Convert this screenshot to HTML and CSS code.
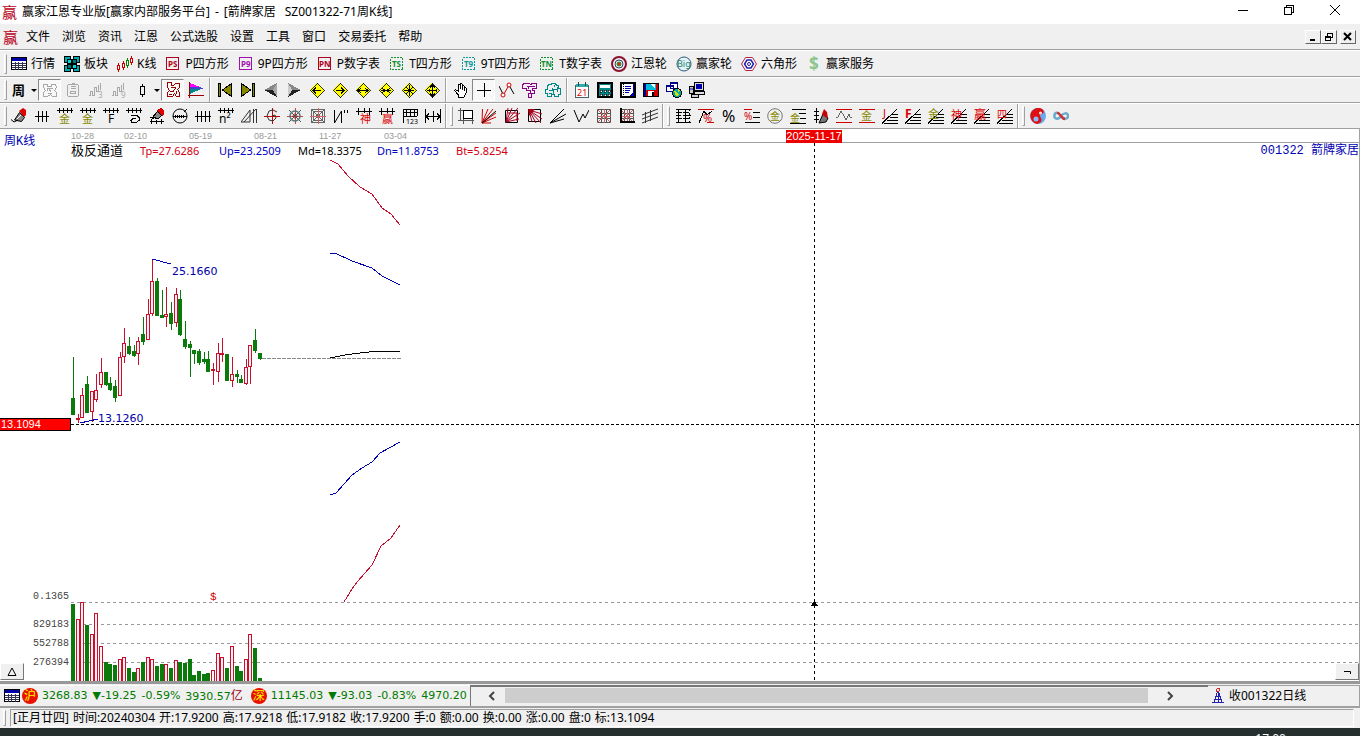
FILE: index.html
```html
<!DOCTYPE html>
<html lang="zh-CN">
<head>
<meta charset="utf-8">
<title>赢家江恩专业版</title>
<link rel="stylesheet" href="styles.css">
</head>
<body>
<svg class="sprite" aria-hidden="true">
  <defs>
    <symbol id="table" viewBox="0 0 16 16"><path fill="#fff" stroke="#000" d="M.5 1.500h15v12H.5z"/><path fill="#00a" d="M1 2h14v3H1z"/><path stroke="#335" d="M1 7.500h14M1 9.500h14M1 11.500h14M4.500 6v8M7.500 6v8M11.500 6v8"/></symbol>
    <symbol id="blocks" viewBox="0 0 16 16"><path fill="#0aa" stroke="#000" d="M.5.5h6v6h-6zM9.500.5h6v6h-6zM.5 9.500h6v6h-6zM9.500 9.500h6v6h-6z"/><path fill="#0dd" stroke="#000" d="M3.500 3.500h4v4h-4zM8.500 8.500h4v4h-4z"/><path fill="#077" stroke="#000" d="M8.500 3.500h4v4h-4zM3.500 8.500h4v4h-4z"/></symbol>
    <symbol id="kline" viewBox="0 0 16 16"><path stroke="#c00" fill="#fff" d="M1.500 7v2M1.500 14v2M.5 9.500h2v4h-2zM6.500 5v2M6.500 12v2M5.500 7.500h2v4h-2zM14.500 0v2M14.500 7v2M13.500 2.500h2v4h-2z"/><path stroke="#080" fill="#fff" d="M10.500 2v2M10.500 10v2M9.500 4.500h2v5h-2z"/></symbol>
    <symbol id="box" viewBox="0 0 16 16"><path stroke="currentColor" d="M1.500 1.500h12v12h-12z"/></symbol>
    <symbol id="boxdash" viewBox="0 0 16 16"><path stroke="currentColor" stroke-dasharray="2 1" d="M1.500 1.500h12v12h-12z"/></symbol>
    <symbol id="wheel" viewBox="0 0 16 16"><circle cx="8" cy="8" r="7" stroke="#8a1030" stroke-width="2"/><circle cx="8" cy="8" r="4" stroke="#246" stroke-width="1"/><circle cx="8" cy="8" r="2" fill="#d22" stroke="#282"/></symbol>
    <symbol id="big" viewBox="0 0 16 16"><circle cx="8" cy="8" r="7" fill="#e4f2fa" stroke="#357" /><text x="1" y="11" font-size="9" fill="#286">Big</text></symbol>
    <symbol id="hex" viewBox="0 0 16 16"><path fill="#fff" stroke="#b02040" d="M4.500 1.500h7l4 6.500-4 6.500h-7L.5 8z"/><path stroke="#22a" stroke-width="1.500" d="M6 4h4l2.500 4L10 12H6L3.500 8z"/><circle cx="8" cy="8" r="1.500" stroke="#22a"/></symbol>
    <symbol id="dollar" viewBox="0 0 16 16"><text x="3" y="14" font-size="17" font-weight="bold" fill="#8cc58c">$</text></symbol>

    <symbol id="maze" viewBox="0 0 16 16"><path stroke="currentColor" d="M1.500 2.500h4v2h4v-2h4l1 3-2 3 2 2v4h-4l-2-2-3 2h-4v-4l2-2-2-3zM4.500 6.500h6M4.500 9.500l2-3 3 4M6 11.500h4"/></symbol>
    <symbol id="paste" viewBox="0 0 16 16"><path stroke="currentColor" d="M3.500 2.500h9l1 1v10l-1 1h-9l-1-1v-10zM6.500 1.500h3M5.500 6.500h5M5.500 9.500h5v2h-5zM5.500 4.500h5"/></symbol>
    <symbol id="wave3" viewBox="0 0 16 16"><path stroke="currentColor" d="M1 13.500h1.500v-4h2v4h1.500v-8h2v4h2v-7M12.500 1v7"/><text x="10" y="16" font-size="8" fill="currentColor">3</text></symbol>
    <symbol id="wave9" viewBox="0 0 16 16"><path stroke="currentColor" d="M1 13.500h1.500v-4h2v4h1.500v-8h2v4h2v-7M12.500 1v7"/><text x="10" y="16" font-size="8" fill="currentColor">9</text></symbol>
    <symbol id="candle" viewBox="0 0 16 16"><path stroke="#000" d="M8.500 2v2.500M8.500 12v3M6.500 4.500h4v8h-4z"/></symbol>
    <symbol id="pattern" viewBox="0 0 16 16"><path stroke="#900" d="M2.500.5h4v3h2l2-2h4v4l-2 2 2 3v4h-3l-2-3-2 3h-5v-4l2-2-2-3zM6 5.500h4M5 9.500h3l3-4M11.500 9v3M3.500 12.500h3"/></symbol>
    <symbol id="flags" viewBox="0 0 16 16"><path fill="#f0f" d="M2 1l10 4H2z"/><path fill="#44c" d="M2 5h10l4 2H2z"/><path fill="#088" d="M2 7h11L2 12z"/><path stroke="#900" d="M1.500 0v15.500M0 13.500h16"/></symbol>
    <symbol id="first" viewBox="0 0 16 16"><path fill="#880" stroke="#000" d="M14.500 1.500v13L5.500 8zM1.500 1.500h2v13h-2z"/></symbol>
    <symbol id="last" viewBox="0 0 16 16"><path fill="#880" stroke="#000" d="M1.500 1.500v13L10.500 8zM12.500 1.500h2v13h-2z"/></symbol>
    <symbol id="prev" viewBox="0 0 16 16"><path fill="#aaa" d="M14 1v14L10 8z"/><path fill="#888" d="M14 1L1 8h9z"/><path fill="#222" d="M1 8l13 7-4-7z"/></symbol>
    <symbol id="next" viewBox="0 0 16 16"><path fill="#ccc" d="M2 1v14L6 8z"/><path fill="#888" d="M2 1l13 7H6z"/><path fill="#222" d="M15 8L2 15l4-7z"/></symbol>
    <symbol id="diamond" viewBox="0 0 16 16"><path fill="#ff0" stroke="#000" stroke-width=".8" d="M8 .5L15.500 8 8 15.500.5 8z"/></symbol>
    <symbol id="d-left" viewBox="0 0 16 16"><use href="#diamond"/><path stroke="#000" d="M4 8.500h8M7 5.500l-3 3 3 3"/></symbol>
    <symbol id="d-right" viewBox="0 0 16 16"><use href="#diamond"/><path stroke="#000" d="M4 8.500h8M9 5.500l3 3-3 3"/></symbol>
    <symbol id="d-wide" viewBox="0 0 16 16"><use href="#diamond"/><path stroke="#000" d="M3 8.500h10M6 6L3 8.500 6 11M10 6l3 2.500-3 2.500"/></symbol>
    <symbol id="d-narrow" viewBox="0 0 16 16"><use href="#diamond"/><path stroke="#000" d="M3 8.500h10M4 6l3 2.500L4 11M12 6L9 8.500l3 2.500"/></symbol>
    <symbol id="d-star" viewBox="0 0 16 16"><use href="#diamond"/><path stroke="#000" d="M3 8.500h10M8.500 3v11M5 5l7 7M12 5l-7 7"/></symbol>
    <symbol id="d-four" viewBox="0 0 16 16"><use href="#diamond"/><path stroke="#000" d="M3 8.500h10M8.500 3v11M6 5.500L8.500 3 11 5.500M6 11.500L8.500 14l2.500-2.500M5 7v3M12 7v3"/></symbol>
    <symbol id="hand" viewBox="0 0 16 16"><path fill="#fff" stroke="#000" d="M5.500 15v-2l-4-4.500 1-1 3 2v-7l1.500-.5.500 5V2l1.500-.5.5 6V3.500l1.500 0 .5 5V5.500l1.500.5v5l-2 4z"/></symbol>
    <symbol id="cross" viewBox="0 0 16 16"><path stroke="#000" d="M1 8.500h14M8.500 1v14"/></symbol>
    <symbol id="nodes" viewBox="0 0 16 16"><path stroke="#000" d="M0 4l4 8M11 5l4 7"/><path stroke="#c00" d="M5 12l5-9"/><circle cx="4" cy="13" r="2" stroke="#c00" fill="#fff"/><circle cx="10" cy="3" r="2" stroke="#c00" fill="#fff"/></symbol>
    <symbol id="purple" viewBox="0 0 16 16"><path stroke="#808" d="M2.500 1.500h5l1 1 2-1h4v5h-4v2h2v3h-3v4h-3v-4h2v-3h-4v-2h-4v-4zM4.500 4.500h8M6.500 4v3"/></symbol>
    <symbol id="teal" viewBox="0 0 16 16"><path stroke="#088" d="M3.500 2.500h3v-1h4l1 2h2v3h2v6h-2v2h-4v-2h-3v2h-4v-3h-2v-4h2v-3zM3.500 8.500h4v-3M8.500 11.500v-4h3M12.500 4.500v5M4 11.500h3M9.500 3v2"/></symbol>
    <symbol id="calendar" viewBox="0 0 16 16"><path fill="#fff" stroke="#466" d="M1.500 3.500h13v12h-13z"/><path fill="#3aa" d="M2 2h12v3H2z"/><path stroke="#244" d="M4.500 0v4M11.500 0v4"/><text x="3" y="14" font-size="9" fill="#d00">21</text></symbol>
    <symbol id="calc" viewBox="0 0 16 16"><path fill="#088" stroke="#000" stroke-width="2" d="M1 1h14v14H1z"/><path fill="#fff" d="M3 3h10v3H3z"/><path fill="#fff" stroke="#000" stroke-width=".6" d="M3 8h2v2H3zM7 8h2v2H7zM11 8h2v2h-2zM3 12h2v2H3zM7 12h2v2H7zM11 12h2v2h-2z"/></symbol>
    <symbol id="note" viewBox="0 0 16 16"><path fill="#fff" stroke="#000" stroke-width="2" d="M1 1h14v14H1z"/><path fill="#00a" d="M13 2h1v12H9l4-3z"/><path stroke="#00a" d="M5 4.500h6M5 6.500h6M5 8.500h5M5 10.500h4"/><path stroke="#000" stroke-dasharray="1 1" d="M3.500 2v12"/></symbol>
    <symbol id="disk" viewBox="0 0 16 16"><path fill="#c00" stroke="#000" d="M.5 1.500h15v13H.5z"/><path fill="#0bd" d="M3 2h10v6H3z"/><path fill="#008" d="M1 2h2v12H1z"/><path fill="#fff" d="M5 9h6v5H5zM7 2h5v4z"/><path fill="#000" d="M9 10h2v4H9z"/></symbol>
    <symbol id="globe" viewBox="0 0 16 16"><path fill="#fff" stroke="#008" d="M4.500.5h7v6h-7zM.5 3.500h7v6h-7z"/><path fill="#008" d="M1 3h7v2H1zM5 0h7v2H5z"/><circle cx="11" cy="11" r="4.500" fill="#0aa" stroke="#000"/><path fill="#dd0" d="M8 9l3 1 2 3-3 1zM12 7l2 2-2 1z"/></symbol>
    <symbol id="pc" viewBox="0 0 16 16"><path fill="#ddd" stroke="#000" d="M5.500.5h9v8h-9zM5.500 9.500h10v3h-10z"/><path fill="#00a" d="M7 2h6v5H7z"/><path fill="#ccc" stroke="#000" d="M.5 4.500h4v7h-4zM2.500 12.500h7v3h-7z"/><path fill="#66c" d="M1 6h3v2H1z"/></symbol>

    <symbol id="pen" viewBox="0 0 16 16"><path fill="#888" stroke="#000" d="M8.500 4.500l5 5-3 4-7-1.500z"/><path fill="#d00" d="M8 3l4-3 3 2v5l-2 2z"/><path stroke="#fff" d="M6 11l4-4"/><path stroke="#000" d="M0 11.500l3 2.500 4-2"/></symbol>
    <symbol id="ticks" viewBox="0 0 16 16"><path stroke="#000" d="M1 8.500h14M4.500 3v11M8.500 3v11M12.500 3v11"/></symbol>
    <symbol id="ticks4" viewBox="0 0 16 16"><path stroke="#000" d="M0 8.500h16M2.500 3v11M6.500 3v11M10.500 3v11M14.500 3v11"/></symbol>
    <symbol id="comb" viewBox="0 0 16 16"><path stroke="#000" d="M0 2.500h16M2.500 0v5M6.500 0v5M10.500 0v5M14.500 0v5"/></symbol>
    <symbol id="comb-gold" viewBox="0 0 16 16"><use href="#comb"/><text x="2" y="15" font-size="11" fill="#880">金</text></symbol>
    <symbol id="comb-f" viewBox="0 0 16 16"><use href="#comb"/><text x="5" y="15" font-size="12" fill="#000">F</text></symbol>
    <symbol id="comb-spiral" viewBox="0 0 16 16"><use href="#comb"/><path stroke="#000" d="M5 7.500h6l2 2v3l-3 2H6l-1-2 2-2h3"/></symbol>
    <symbol id="pen-ruler" viewBox="0 0 16 16"><path fill="#888" stroke="#000" d="M8.500 3.500l4 4-3 3-6-1z"/><path fill="#d00" d="M8 2l4-2 3 2v4l-2 2z"/><path stroke="#000" d="M1 13.500h14M2.500 11v5M7.500 12v4M12.500 11v5M1 9.500l4 1"/></symbol>
    <symbol id="round-ruler" viewBox="0 0 16 16"><circle cx="8" cy="8" r="7" stroke="#000"/><path stroke="#000" d="M1 8.500h14M3.500 7v3M5.500 7v3M7.500 7v3M9.500 7v3M11.500 7v3M12 4l3-3"/></symbol>
    <symbol id="comb-n" viewBox="0 0 16 16"><use href="#comb"/><text x="1" y="15" font-size="12" fill="#000">n²</text></symbol>
    <symbol id="hills" viewBox="0 0 16 16"><path stroke="#333" d="M0 14L9 2v12zM3 14L15 1M12.500 1v14M15.500 1v14"/></symbol>
    <symbol id="spiral" viewBox="0 0 16 16"><path stroke="#c00" d="M0 8.500h16M8.500 0v16"/><path stroke="#333" d="M8 8l3-1 1 3-3 3-4-1-2-4 2-5 4-1 4 2"/></symbol>
    <symbol id="radial" viewBox="0 0 16 16"><path stroke="#c44" d="M0 8.500h16M8.500 0v16"/><path stroke="#555" d="M2 2l12 12M14 2L2 14"/><circle cx="8" cy="8" r="5" stroke="#577" stroke-width="1.500"/><circle cx="8" cy="8" r="2" stroke="#833"/></symbol>
    <symbol id="squares" viewBox="0 0 16 16"><path stroke="#666" d="M1.500 1.500h13v13h-13zM3.500 3.500h9v9h-9zM6.500 6.500h3v3h-3zM1 1l14 14M15 1L1 15"/><path stroke="#c66" d="M0 8.500h16M8.500 0v16"/></symbol>
    <symbol id="zig" viewBox="0 0 16 16"><path stroke="#000" d="M1.500 2v13L8.500 3v12M11.500 2v3M14.500 2v3"/></symbol>
    <symbol id="comb-shen" viewBox="0 0 16 16"><path stroke="#000" d="M0 3.500h16M2.500 0v7M8.500 0v5M13.500 0v7"/><text x="4" y="15" font-size="11" fill="#d00">神</text></symbol>
    <symbol id="comb-win" viewBox="0 0 16 16"><path stroke="#000" d="M0 3.500h16M2.500 0v7M8.500 0v5M13.500 0v7"/><text x="3" y="15" font-size="11" fill="#d00">赢</text></symbol>
    <symbol id="ruler123" viewBox="0 0 16 16"><path stroke="#000" d="M1.500 15V1.500h14V8M1 4.500h14M1 8.500h14M4.500 2v7M8.500 2v7M12.500 2v7"/><text x="4" y="16" font-size="7" fill="#000">123</text></symbol>
    <symbol id="span" viewBox="0 0 16 16"><path stroke="#000" d="M.5 1v14M15.500 1v14M1 8.500h14M4 5.500l-3 3 3 3M12 5.500l3 3-3 3M8.500 3v11"/></symbol>

    <symbol id="frame" viewBox="0 0 16 16"><path stroke="#555" d="M2.500 0v13M0 2.500h5M0 12.500h16M5.500 10v6M14.500 10v6"/><path fill="#fff" stroke="#000" d="M5.500 2.500h9v8h-9z"/></symbol>
    <symbol id="fan" viewBox="0 0 16 16"><path stroke="#c00" d="M1 15L1.500 1M1 15L7 1M1 15L12 1M1 15L15 5M1 15l14-6M1 15h9"/><path stroke="#000" d="M1 15L15 3"/></symbol>
    <symbol id="fan-box" viewBox="0 0 16 16"><path stroke="#000" d="M1.500 2.500h12v12h-12z"/><path stroke="#a02" d="M2 14L4 0M2 14L8 0M2 14L14 0M2 14l14-9M2 14l13-3M4 5h9v8"/></symbol>
    <symbol id="fan-down" viewBox="0 0 16 16"><path stroke="#000" d="M1.500 1.500h12v12h-12z"/><path fill="#900" d="M1 1h7L2 8z"/><path stroke="#a02" d="M2 2l13 4M2 2l13 9M2 2l12 13M2 2l7 13M2 2l3 12"/></symbol>
    <symbol id="rays" viewBox="0 0 16 16"><path stroke="#000" d="M0 15L14 1M0 15L16 6M0 15l14-4"/></symbol>
    <symbol id="vee" viewBox="0 0 16 16"><path stroke="#000" d="M1 2l5 12 4-8 2 4 4-8"/></symbol>
    <symbol id="net" viewBox="0 0 16 16"><path stroke="#555" d="M1.500 1.500h13v13h-13zM5.500 1v14M10.500 1v14M1 5.500h14M1 10.500h14"/><path stroke="#c66" d="M1 1l14 14M15 1L1 15M1 8.500h14M8.500 1v14"/></symbol>
    <symbol id="net-axis" viewBox="0 0 16 16"><use href="#net"/><path stroke="#000" stroke-width="2" d="M2 0v14h14"/></symbol>
    <symbol id="channel" viewBox="0 0 16 16"><path stroke="#333" d="M0 7l16-6M0 11l16-6M0 15l16-6M3.500 4v11M8.500 2v11"/></symbol>

    <symbol id="ladder" viewBox="0 0 16 16"><path stroke="#000" d="M3.500 1v14M10.500 1v14M1 1.500h15M1 4.500h6M1 7.500h5M1 10.500h6M1 14.500h15M8 4.500h6M8 7.500h8M8 10.500h6"/><path stroke="#000" stroke-dasharray="2 2" d="M14.500 1v14"/></symbol>
    <symbol id="pct-red" viewBox="0 0 16 16"><path stroke="#c00" d="M0 1.500h16M9 14.500h7"/><path stroke="#000" d="M1 15L6 3l3 4 5-4"/><text x="5" y="14" font-size="11" fill="#c00">%</text></symbol>
    <symbol id="pct" viewBox="0 0 16 16"><text x="1" y="14" font-size="16" fill="#000">%</text></symbol>
    <symbol id="pct-lines" viewBox="0 0 16 16"><path stroke="#c00" d="M0 1.500h8"/><path stroke="#000" d="M9 4.500h7M9 9.500h7M1 14.500h15"/><text x="0" y="12" font-size="10" fill="#c00">%</text></symbol>
    <symbol id="gold-round" viewBox="0 0 16 16"><circle cx="8" cy="8" r="7.300" stroke="#777"/><text x="3" y="12" font-size="10" fill="#880">金</text></symbol>
    <symbol id="gold-lines" viewBox="0 0 16 16"><path stroke="#000" d="M2 1.500h14M9 5.500h7M10 10.500h6M0 15.500h16"/><text x="0" y="14" font-size="10" fill="#880">金</text></symbol>
    <symbol id="pen-axis" viewBox="0 0 16 16"><path stroke="#000" d="M3.500 0v15M1 3.500h5M1 7.500h5M1 11.500h5"/><path fill="#777" stroke="#000" d="M10 6l5 4-2 4-7 1z"/><path fill="#c00" d="M9 6l2-5 3 3 1 6-3-1z"/></symbol>
    <symbol id="wave-lines" viewBox="0 0 16 16"><path stroke="#c00" d="M0 1.500h16M0 14.500h16"/><path stroke="#666" d="M0 9h2l3-6 3 5 2 4 3-6 1 3h2"/></symbol>
    <symbol id="gold-band" viewBox="0 0 16 16"><path stroke="#c00" d="M0 1.500h16M0 14.500h16"/><text x="2" y="12" font-size="11" fill="#880">金</text></symbol>
    <symbol id="slope" viewBox="0 0 16 16"><path stroke="#000" d="M0 15.500L15 1M9 6.500h7M8 9.500h8M5 12.500h11M2 15.500h14"/></symbol>
    <symbol id="s-j" viewBox="0 0 16 16"><use href="#slope"/><text x="1" y="9" font-size="11" fill="#d00">J</text></symbol>
    <symbol id="s-f" viewBox="0 0 16 16"><use href="#slope"/><text x="0" y="10" font-size="12" font-weight="bold" fill="#d00">F</text></symbol>
    <symbol id="s-gold" viewBox="0 0 16 16"><use href="#slope"/><text x="0" y="10" font-size="11" fill="#880">金</text></symbol>
    <symbol id="s-shen" viewBox="0 0 16 16"><use href="#slope"/><text x="0" y="11" font-size="11" fill="#d00">神</text></symbol>
    <symbol id="s-win" viewBox="0 0 16 16"><use href="#slope"/><text x="0" y="11" font-size="12" fill="#d00">赢</text></symbol>
    <symbol id="s-four" viewBox="0 0 16 16"><use href="#slope"/><text x="0" y="10" font-size="10" fill="#d00">四</text></symbol>
    <symbol id="yinyang" viewBox="0 0 16 16"><circle cx="8" cy="8" r="8" fill="#6ae"/><path fill="#d11" d="M10 0a8 8 0 1 0-3 16c5-1 5-4 4-6s-2-3 1-4 2-5-2-6z"/><circle cx="10.500" cy="5" r="1.500" fill="#fdd"/><circle cx="6" cy="11" r="2.500" fill="#8bf"/></symbol>
    <symbol id="infinity" viewBox="0 0 16 16"><path stroke="#6ac" stroke-width="2.500" d="M8 8c2-3 7-4 7 0s-5 3-7 0"/><path stroke="#6ac" stroke-width="2.500" d="M4 4.800c-3 0-4 6 0 6 2 0 3-1 4-2.800"/><path stroke="#c33" stroke-width="2.500" d="M4 4.800c2 0 3 2 4 3.200s2 3 4 3"/></symbol>
  </defs>
</svg>

<header class="titlebar">
  <span class="logo">赢</span>
  <h1 class="title"><span>赢家江恩专业版[赢家内部服务平台]</span><span>-</span><span>[箭牌家居</span><span class="code">SZ001322-71周K线]</span></h1>
  <div class="wincontrols">
    <button aria-label="最小化"><svg viewBox="0 0 12 12"><path d="M1 6.500h10"/></svg></button>
    <button aria-label="还原"><svg viewBox="0 0 12 12"><path d="M1.500 3.500h7v7h-7zM3.500 3V1.500h7v7H9"/></svg></button>
    <button aria-label="关闭"><svg viewBox="0 0 12 12" class="smooth"><path d="M1 1l10 10M11 1L1 11"/></svg></button>
  </div>
</header>

<nav class="menubar">
  <span class="logo">赢</span>
  <button>文件</button><button>浏览</button><button>资讯</button><button>江恩</button><button>公式选股</button><button>设置</button><button>工具</button><button>窗口</button><button>交易委托</button><button>帮助</button>
  <div class="mdi">
    <button aria-label="最小化窗口"><svg viewBox="0 0 10 10"><path d="M2 8h5"/></svg></button>
    <button aria-label="还原窗口"><svg viewBox="0 0 10 10"><path class="thin" d="M3.500 4V1.500h5v4H7M3 1.500h6M1.500 4.500h5v4h-5zM1 5.500h6"/></svg></button>
    <button aria-label="关闭窗口" class="apart"><svg viewBox="0 0 10 10" class="smooth"><path d="M1 1l7 7M8 1L1 8"/></svg></button>
  </div>
</nav>

<div class="toolbar labelled">
  <i class="grip"></i>
  <button><svg><use href="#table"/></svg>行情</button>
  <button><svg><use href="#blocks"/></svg>板块</button>
  <button><svg><use href="#kline"/></svg>K线</button>
  <button><svg class="red"><use href="#box"/><text x="3" y="11">PS</text></svg>P四方形</button>
  <button><svg class="violet"><use href="#box"/><text x="3" y="11">P9</text></svg>9P四方形</button>
  <button><svg class="red"><use href="#box"/><text x="2" y="11">PN</text></svg>P数字表</button>
  <button><svg class="green"><use href="#boxdash"/><text x="3" y="11">TS</text></svg>T四方形</button>
  <button><svg class="cyan"><use href="#boxdash"/><text x="3" y="11">T9</text></svg>9T四方形</button>
  <button><svg class="green"><use href="#boxdash"/><text x="2" y="11">TN</text></svg>T数字表</button>
  <button><svg class="smooth"><use href="#wheel"/></svg>江恩轮</button>
  <button><svg class="smooth"><use href="#big"/></svg>赢家轮</button>
  <button><svg class="smooth"><use href="#hex"/></svg>六角形</button>
  <button><svg><use href="#dollar"/></svg>赢家服务</button>
</div>

<div class="toolbar">
  <i class="grip"></i>
  <button class="period">周</button><button class="drop" aria-label="选择周期"></button>
  <button class="pressed dim" aria-label="形态"><svg><use href="#maze"/></svg></button>
  <button class="dim" aria-label="粘贴"><svg><use href="#paste"/></svg></button>
  <button class="dim" aria-label="三浪"><svg><use href="#wave3"/></svg></button>
  <button class="dim" aria-label="九浪"><svg><use href="#wave9"/></svg></button>
  <button aria-label="K线样式"><svg><use href="#candle"/></svg></button><button class="drop" aria-label="选择样式"></button>
  <button class="pressed" aria-label="图案"><svg><use href="#pattern"/></svg></button>
  <button aria-label="筹码"><svg><use href="#flags"/></svg></button>
  <i class="sep"></i>
  <button aria-label="最前"><svg><use href="#first"/></svg></button>
  <button aria-label="最后"><svg><use href="#last"/></svg></button>
  <button aria-label="向前"><svg><use href="#prev"/></svg></button>
  <button aria-label="向后"><svg><use href="#next"/></svg></button>
  <button aria-label="左移"><svg><use href="#d-left"/></svg></button>
  <button aria-label="右移"><svg><use href="#d-right"/></svg></button>
  <button aria-label="拉宽"><svg><use href="#d-wide"/></svg></button>
  <button aria-label="压缩"><svg><use href="#d-narrow"/></svg></button>
  <button aria-label="缩小"><svg><use href="#d-star"/></svg></button>
  <button aria-label="放大"><svg><use href="#d-four"/></svg></button>
  <i class="sep"></i>
  <button aria-label="拖动"><svg><use href="#hand"/></svg></button>
  <button class="pressed" aria-label="十字光标"><svg><use href="#cross"/></svg></button>
  <button aria-label="节点"><svg class="smooth"><use href="#nodes"/></svg></button>
  <button aria-label="板块图"><svg><use href="#purple"/></svg></button>
  <button aria-label="云图"><svg><use href="#teal"/></svg></button>
  <i class="sep"></i>
  <button aria-label="日历"><svg><use href="#calendar"/></svg></button>
  <button aria-label="计算器"><svg><use href="#calc"/></svg></button>
  <button aria-label="笔记"><svg><use href="#note"/></svg></button>
  <button aria-label="保存"><svg><use href="#disk"/></svg></button>
  <button aria-label="网络"><svg><use href="#globe"/></svg></button>
  <button aria-label="电脑"><svg><use href="#pc"/></svg></button>
</div>

<div class="toolbar drawing">
  <i class="grip"></i>
  <button aria-label="画笔"><svg class="smooth"><use href="#pen"/></svg></button>
  <button aria-label="等分线"><svg><use href="#ticks"/></svg></button>
  <button aria-label="黄金线"><svg><use href="#comb-gold"/></svg></button>
  <button aria-label="黄金线二"><svg><use href="#comb-gold"/></svg></button>
  <button aria-label="斐波那契"><svg><use href="#comb-f"/></svg></button>
  <button aria-label="螺旋周期"><svg><use href="#comb-spiral"/></svg></button>
  <button aria-label="画笔标尺"><svg><use href="#pen-ruler"/></svg></button>
  <button aria-label="圆形标尺"><svg class="smooth"><use href="#round-ruler"/></svg></button>
  <button aria-label="周期线"><svg><use href="#ticks4"/></svg></button>
  <button aria-label="平方线"><svg><use href="#comb-n"/></svg></button>
  <button aria-label="三角线"><svg class="smooth"><use href="#hills"/></svg></button>
  <button aria-label="螺旋"><svg class="smooth"><use href="#spiral"/></svg></button>
  <button aria-label="圆网"><svg class="smooth"><use href="#radial"/></svg></button>
  <button aria-label="方网"><svg class="smooth"><use href="#squares"/></svg></button>
  <button aria-label="折线"><svg class="smooth"><use href="#zig"/></svg></button>
  <button aria-label="神线"><svg><use href="#comb-shen"/></svg></button>
  <button aria-label="赢线"><svg><use href="#comb-win"/></svg></button>
  <button aria-label="数字尺"><svg><use href="#ruler123"/></svg></button>
  <button aria-label="区间"><svg><use href="#span"/></svg></button>
  <i class="sep"></i><i class="grip"></i>
  <button aria-label="方框"><svg><use href="#frame"/></svg></button>
  <button aria-label="扇形"><svg class="smooth"><use href="#fan"/></svg></button>
  <button aria-label="扇形框"><svg class="smooth"><use href="#fan-box"/></svg></button>
  <button aria-label="下扇形"><svg class="smooth"><use href="#fan-down"/></svg></button>
  <button aria-label="射线"><svg class="smooth"><use href="#rays"/></svg></button>
  <button aria-label="波折"><svg class="smooth"><use href="#vee"/></svg></button>
  <button aria-label="网格"><svg class="smooth"><use href="#net"/></svg></button>
  <button aria-label="坐标网格"><svg class="smooth"><use href="#net-axis"/></svg></button>
  <button aria-label="通道"><svg class="smooth"><use href="#channel"/></svg></button>
  <i class="sep"></i><i class="grip"></i>
  <button aria-label="阶梯"><svg><use href="#ladder"/></svg></button>
  <button aria-label="百分比折线"><svg><use href="#pct-red"/></svg></button>
  <button aria-label="百分比"><svg><use href="#pct"/></svg></button>
  <button aria-label="百分比线"><svg><use href="#pct-lines"/></svg></button>
  <button aria-label="黄金圆"><svg class="smooth"><use href="#gold-round"/></svg></button>
  <button aria-label="黄金横线"><svg><use href="#gold-lines"/></svg></button>
  <button aria-label="轴画笔"><svg class="smooth"><use href="#pen-axis"/></svg></button>
  <button aria-label="波动带"><svg><use href="#wave-lines"/></svg></button>
  <button aria-label="黄金带"><svg><use href="#gold-band"/></svg></button>
  <button aria-label="江恩角度"><svg><use href="#s-j"/></svg></button>
  <button aria-label="斐波角度"><svg><use href="#s-f"/></svg></button>
  <button aria-label="黄金角度"><svg><use href="#s-gold"/></svg></button>
  <button aria-label="神角度"><svg><use href="#s-shen"/></svg></button>
  <button aria-label="赢角度"><svg><use href="#s-win"/></svg></button>
  <button aria-label="四角度"><svg><use href="#s-four"/></svg></button>
  <i class="sep"></i><i class="grip"></i>
  <button aria-label="阴阳"><svg class="smooth"><use href="#yinyang"/></svg></button>
  <button aria-label="无限"><svg class="smooth"><use href="#infinity"/></svg></button>
</div>

<main class="chart">
  <svg class="plot" id="plot" role="img" aria-label="周K线图"></svg>
  <div class="charthead">
    <span class="charttype">周K线</span>
    <div class="axis"><span>10-28</span><span>02-10</span><span>05-19</span><span>08-21</span><span>11-27</span><span>03-04</span></div>
    <div class="legend">
      <span class="name">极反通道</span><span class="c-red">Tp=27.6286</span><span class="c-blue">Up=23.2509</span><span>Md=18.3375</span><span class="c-blue">Dn=11.8753</span><span class="c-red">Bt=5.8254</span>
      <span class="stock">001322 箭牌家居</span>
    </div>
  </div>
  <span class="dateflag">2025-11-17</span>
  <span class="priceflag">13.1094</span>
  <button class="corner left" aria-label="展开"><svg viewBox="0 0 10 10"><path d="M5 1l4 7.500H1z"/></svg></button>
  <button class="corner right" aria-label="收起"><svg viewBox="0 0 10 10"><path d="M2 4.500h6.500V7"/></svg></button>
</main>

<section class="ticker">
  <div class="quotes">
    <svg class="quoteicon"><use href="#table"/></svg>
    <b class="badge">沪</b><p class="index"><span>3268.83</span><span>▼-19.25</span><span>-0.59%</span><span>3930.57<em>亿</em></span></p>
    <b class="badge">深</b><p class="index"><span>11145.03</span><span>▼-93.03</span><span>-0.83%</span><span>4970.20</span></p>
  </div>
  <div class="scroll">
    <button aria-label="向左"><svg viewBox="0 0 8 10"><path d="M6 1L2 5l4 4"/></svg></button>
    <div class="thumb"></div>
    <button aria-label="向右"><svg viewBox="0 0 8 10"><path d="M2 1l4 4-4 4"/></svg></button>
  </div>
  <div class="receive">
    <svg viewBox="0 0 12 16"><path stroke="#22a" fill="#ccf" d="M5.500 4L2 14M6.500 4L10 14M3 11h6M4 8h4M0 14.500h12M6 5v9"/><circle cx="6" cy="2" r="1.500" stroke="#d22"/></svg>
    <span>收001322日线</span>
  </div>
</section>

<footer class="status"><i class="grip"></i><p><span>[正月廿四]</span><span>时间:20240304</span><span>开:17.9200</span><span>高:17.9218</span><span>低:17.9182</span><span>收:17.9200</span><span>手:0</span><span>额:0.00</span><span>换:0.00</span><span>涨:0.00</span><span>盘:0</span><span>标:13.1094</span></p></footer>
<div class="taskbar"><time>17:00</time></div>
<script src="chart.js"></script>
</body>
</html>
```

FILE: styles.css
```css
* { box-sizing: border-box; }
html, body { height: 100%; margin: 0; }
body {
  display: flex;
  flex-direction: column;
  overflow: hidden;
  background: #f0f0f0;
  color: #000;
  font: 12px/16px "Noto Sans", "Noto Sans CJK SC", sans-serif;
}
button {
  margin: 0;
  padding: 0;
  border: 0;
  background: none;
  color: inherit;
  font: inherit;
}
svg { fill: none; shape-rendering: crispEdges; }
svg.smooth { shape-rendering: auto; }
.sprite { position: absolute; width: 0; height: 0; }

.titlebar {
  display: flex;
  align-items: center;
  flex: none;
  height: 24px;
  padding-left: 2px;
  background: #fff;
}
.logo {
  width: 20px;
  color: #b80018;
  font: 15px/18px "Noto Sans CJK SC", sans-serif;
}
.title { display: flex; gap: 5px; margin: 0; font-size: 12px; font-weight: 400; white-space: nowrap; }
.title .code { margin-left: 4px; }
.wincontrols { display: flex; margin-left: auto; padding-right: 2px; }
.wincontrols button { width: 46px; height: 20px; }
.wincontrols svg { width: 12px; height: 12px; stroke: #000; }

.menubar {
  display: flex;
  align-items: center;
  flex: none;
  height: 26px;
  padding-left: 3px;
  border-bottom: 1px solid #a0a0a0;
}
.menubar > button { margin-right: 12px; padding: 0; }
.menubar .logo { width: 23px; }
.mdi { display: flex; margin-left: auto; padding-right: 4px; }
.mdi button {
  display: grid;
  place-items: center;
  width: 16px;
  height: 14px;
  border: 1px solid;
  border-color: #fff #666 #666 #fff;
}
.mdi .apart { margin-left: 3px; }
.mdi svg { width: 10px; height: 10px; stroke: #000; stroke-width: 2; }
.mdi .thin { stroke-width: 1; }

.toolbar {
  display: flex;
  align-items: center;
  flex: none;
  height: 26px;
  padding-left: 4px;
  border-top: 1px solid #fff;
  border-bottom: 1px solid #a0a0a0;
}
.toolbar svg { display: block; flex: none; width: 16px; height: 16px; }
.toolbar button { display: grid; place-items: center; flex: none; width: 23px; height: 22px; }
.toolbar svg text, symbol text { font-family: "Noto Sans", "Noto Sans CJK SC", sans-serif; }
.grip { flex: none; width: 3px; height: 20px; border: 1px solid; border-color: #fff #a0a0a0 #a0a0a0 #fff; }
.sep { flex: none; width: 2px; height: 24px; margin: 0 2px; border-left: 1px solid #a0a0a0; border-right: 1px solid #fff; }

.toolbar.labelled { height: 27px; gap: 9px; }
.toolbar.labelled .grip { margin-right: -5px; }
.toolbar.labelled button { display: flex; gap: 4px; width: auto; white-space: nowrap; }
.labelled svg text { fill: currentColor; font-size: 8px; font-weight: 700; }
.red { color: #b00020; }
.violet { color: #a010b0; }
.green { color: #109030; }
.cyan { color: #109898; }

.toolbar .period { font-size: 13px; font-weight: 700; }
.toolbar .drop { width: 8px; }
.drop::after { content: ""; border: 3px solid transparent; border-top-color: #000; border-bottom: 0; }
.toolbar .pressed { border: 1px solid; border-color: #888 #fff #fff #888; background: #f8f8f8; }
.dim { color: #a8a8a8; }
.drawing .sep { margin: 0 3px 0 1px; }
.drawing .sep + .grip { margin-right: 1px; }

.chart { position: relative; flex: 1; min-height: 0; overflow: hidden; border-right: 1px solid #a0a0a0; background: #fff; }
.plot { position: absolute; inset: 0; width: 100%; height: 100%; }
.plot text { font-family: "DejaVu Sans", sans-serif; font-size: 11px; fill: #00a; }
.plot .scale { font-family: "Liberation Mono", monospace; font-size: 10px; fill: #444; text-anchor: end; }
.plot .mark { font-family: "Liberation Mono", monospace; fill: #c00; }
.charthead { display: grid; grid-template: 14px 16px / 71px 1fr; }
.charttype {
  grid-row: 1 / 3;
  padding: 5px 0 0 4px;
  color: #0000b0;
  font-family: "Liberation Mono", "Noto Sans CJK SC", monospace;
  font-size: 12px;
}
.axis { display: flex; border-bottom: 1px solid #a0a0a0; color: #999; font: 9px/14px "Liberation Sans", sans-serif; }
.axis span { width: 65px; }
.axis span:first-child { width: 53px; }
.legend { display: flex; font-size: 11px; white-space: nowrap; }
.legend > span { width: 79px; }
.legend > .name { width: 69px; font-size: 13px; line-height: 14px; }
.legend > .stock {
  width: auto;
  margin-left: auto;
  color: #0000b0;
  font-family: "Liberation Mono", "Noto Sans CJK SC", monospace;
  font-size: 12px;
}
.c-red { color: #d00010; }
.c-blue { color: #0000c0; }
.dateflag {
  position: absolute;
  top: 1px;
  left: 814px;
  width: 56px;
  margin-left: -28px;
  background: #e00;
  color: #fff;
  font: 11px/13px "Liberation Sans", sans-serif;
  text-align: center;
}
.priceflag {
  position: absolute;
  top: 289px;
  left: 0;
  width: 71px;
  border: 1px solid #000;
  border-left: 0;
  background: #f00;
  color: #fff;
  font: 11px/11px "Liberation Sans", sans-serif;
  padding-left: 1px;
}
.corner {
  position: absolute;
  bottom: 1px;
  display: grid;
  place-items: center;
  width: 24px;
  height: 17px;
  border: 1px solid;
  border-color: #fff #777 #777 #fff;
  background: #f0f0f0;
}
.corner svg { width: 10px; height: 10px; stroke: #000; shape-rendering: auto; }
.corner.left { left: 0; }
.corner.right { right: 0; }

.ticker { display: flex; flex: none; height: 27px; padding-top: 1px; border-top: 3px solid #989898; border-bottom: 2px solid #a0a0a0; }
.quotes { display: flex; align-items: center; flex: none; width: 470px; padding-left: 4px; overflow: hidden; border-top: 1px solid #fff; white-space: nowrap; }
.quoteicon { flex: none; width: 16px; height: 16px; margin-right: 2px; }
.badge {
  flex: none;
  width: 16px;
  height: 16px;
  margin-right: 4px;
  border-radius: 8px;
  background: #e81000;
  color: #ff0;
  font-size: 12px;
  font-weight: 400;
  line-height: 15px;
  text-align: center;
}
.index { display: flex; gap: 5px; margin: 0 8px 0 0; color: #007a00; font-family: "DejaVu Sans", "Noto Sans CJK SC", sans-serif; font-size: 11px; }
.index em { color: #a00010; font-style: normal; font-size: 12px; }
.scroll { display: flex; flex: 1; border-top: 2px solid #777; border-left: 1px solid #777; }
.scroll button { flex: none; width: 34px; padding-left: 8px; }
.scroll button:last-child { width: 60px; padding: 0 17px 0 0; }
.scroll svg { width: 8px; height: 10px; stroke: #444; stroke-width: 2; shape-rendering: auto; }
.thumb { flex: 1; height: 15px; margin-top: 1px; background: #cdcdcd; }
.receive { display: flex; align-items: center; flex: none; width: 152px; gap: 5px; padding-left: 4px; border-top: 1px solid #a0a0a0; border-right: 1px solid #a0a0a0; }
.receive svg { width: 12px; height: 16px; }

.status { display: flex; align-items: center; flex: none; height: 20px; padding-left: 3px; }
.status .grip { height: 16px; margin-right: 4px; }
.status p {
  display: flex;
  flex: 1;
  gap: 4px;
  height: 18px;
  margin: 0 6px 0 0;
  padding-left: 2px;
  border: 1px solid;
  border-color: #a0a0a0 #fff #fff #a0a0a0;
  line-height: 16px;
  white-space: nowrap;
}
.taskbar { flex: none; height: 8px; overflow: hidden; padding: 3px 74px 0 0; background: #252f2e; color: #fff; text-align: right; }
.taskbar time { display: block; }
```

FILE: chart.js
```js
const NS = "http://www.w3.org/2000/svg";
const plot = document.getElementById("plot");
const UP = "#c8102e", DOWN = "#0a7a0a";

function add(tag, attrs, text) {
  const el = document.createElementNS(NS, tag);
  for (const key in attrs) el.setAttribute(key, attrs[key]);
  if (text) el.textContent = text;
  plot.appendChild(el);
}

// Horizontal scale lines of the volume pane
[[473, "0.1365"], [495, "829183"], [514, "552788"], [533, "276394"]].forEach(([y, label], i) => {
  add("line", { x1: 71, x2: "100%", y1: y + .5, y2: y + .5, stroke: "#999", "stroke-dasharray": "3 3" });
  add("text", { x: 69, y: i ? y + 3 : y - 3, class: "scale" }, label);
});
add("text", { x: 210, y: 471, class: "mark" }, "$");

// x, high, body top, body bottom, low, rising, volume top
const bars = [
  [73,228,269,285,285,0,475],[78,285,289,290,294,1,490],[82,259,266,288,288,1,473],[87,247,255,283,283,0,496],
  [92,262,262,282,293,1,505],[96,245,261,270,273,1,484],[101,229,243,255,259,1,517],[106,243,243,255,257,0,533],
  [110,248,254,260,262,0,535],[115,251,257,268,273,0,536],[120,223,228,266,266,1,530],[124,199,214,227,234,1,528],
  [129,208,217,224,226,0,539],[134,216,222,226,228,0,543],[138,208,212,224,236,1,539],[143,188,205,212,216,0,533],
  [148,170,185,210,210,1,528],[152,130,152,184,187,1,530],[157,149,152,186,187,0,537],[162,161,186,188,188,0,535],
  [166,158,185,187,198,1,535],[171,173,184,194,201,0,539],[176,159,165,193,198,1,531],[180,161,170,205,207,0,533],
  [185,192,210,217,220,0,534],[190,212,215,218,248,0,530],[194,221,221,224,235,0,546],[199,220,222,233,236,0,542],
  [204,223,230,232,235,0,545],[208,222,230,242,242,0,544],[213,234,240,241,256,1,541],[218,214,224,242,253,1,524],
  [222,209,224,225,233,1,528],[227,225,225,251,252,0,539],[232,228,245,251,258,1,517],[237,241,245,247,254,0,537],
  [241,246,250,253,254,0,542],[246,230,238,254,256,1,530],[250,216,216,237,255,1,505],[255,200,211,221,224,0,519],
  [260,224,224,229,231,0,549]
];
for (const [x, high, top, bottom, low, up, vol] of bars) {
  const color = up ? UP : DOWN;
  add("line", { x1: x + .5, x2: x + .5, y1: high, y2: low, stroke: color });
  add("rect", { x: x - 1.5, y: top + .5, width: 3, height: Math.max(bottom - top, 1), fill: up ? "#fff0f2" : color, stroke: color });
  add("rect", { x: x - 1.5, y: vol + .5, width: 3, height: 552 - vol, fill: up ? "#fff0f2" : color, stroke: color });
}

// Channel curves
const curves = [
  ["#c8102e", "330,31 338,35 348,47 360,58 372,65 382,79 391,85 400,96"],
  ["#0000b0", "330,124 335,124 352,132 372,139 382,147 400,156"],
  ["#000", "330,229 345,226 360,224 378,222 400,223"],
  ["#0000b0", "330,366 336,364 352,346 362,339 372,333 380,324 400,313"],
  ["#c8102e", "344,473 352,460 358,452 372,436 381,417 391,409 400,396"]
];
for (const [stroke, points] of curves) add("polyline", { points, stroke });
add("line", { x1: 262, x2: 402, y1: 229.5, y2: 229.5, stroke: "#888", "stroke-dasharray": "4 1" });

// High and low callouts
add("line", { x1: 152, y1: 130, x2: 171, y2: 135, stroke: "#0000b0" });
add("text", { x: 172, y: 146 }, "25.1660");
add("line", { x1: 80, y1: 294, x2: 98, y2: 290, stroke: "#0000b0" });
add("text", { x: 98, y: 293 }, "13.1260");

// Crosshair
add("line", { x1: 71, x2: "100%", y1: 295.5, y2: 295.5, stroke: "#000", "stroke-dasharray": "3 2" });
add("line", { x1: 814.5, x2: 814.5, y1: 14, y2: 551, stroke: "#000", "stroke-dasharray": "3 3" });
add("path", { d: "M814.5 472l4 5h-8z", fill: "#000" });
```
